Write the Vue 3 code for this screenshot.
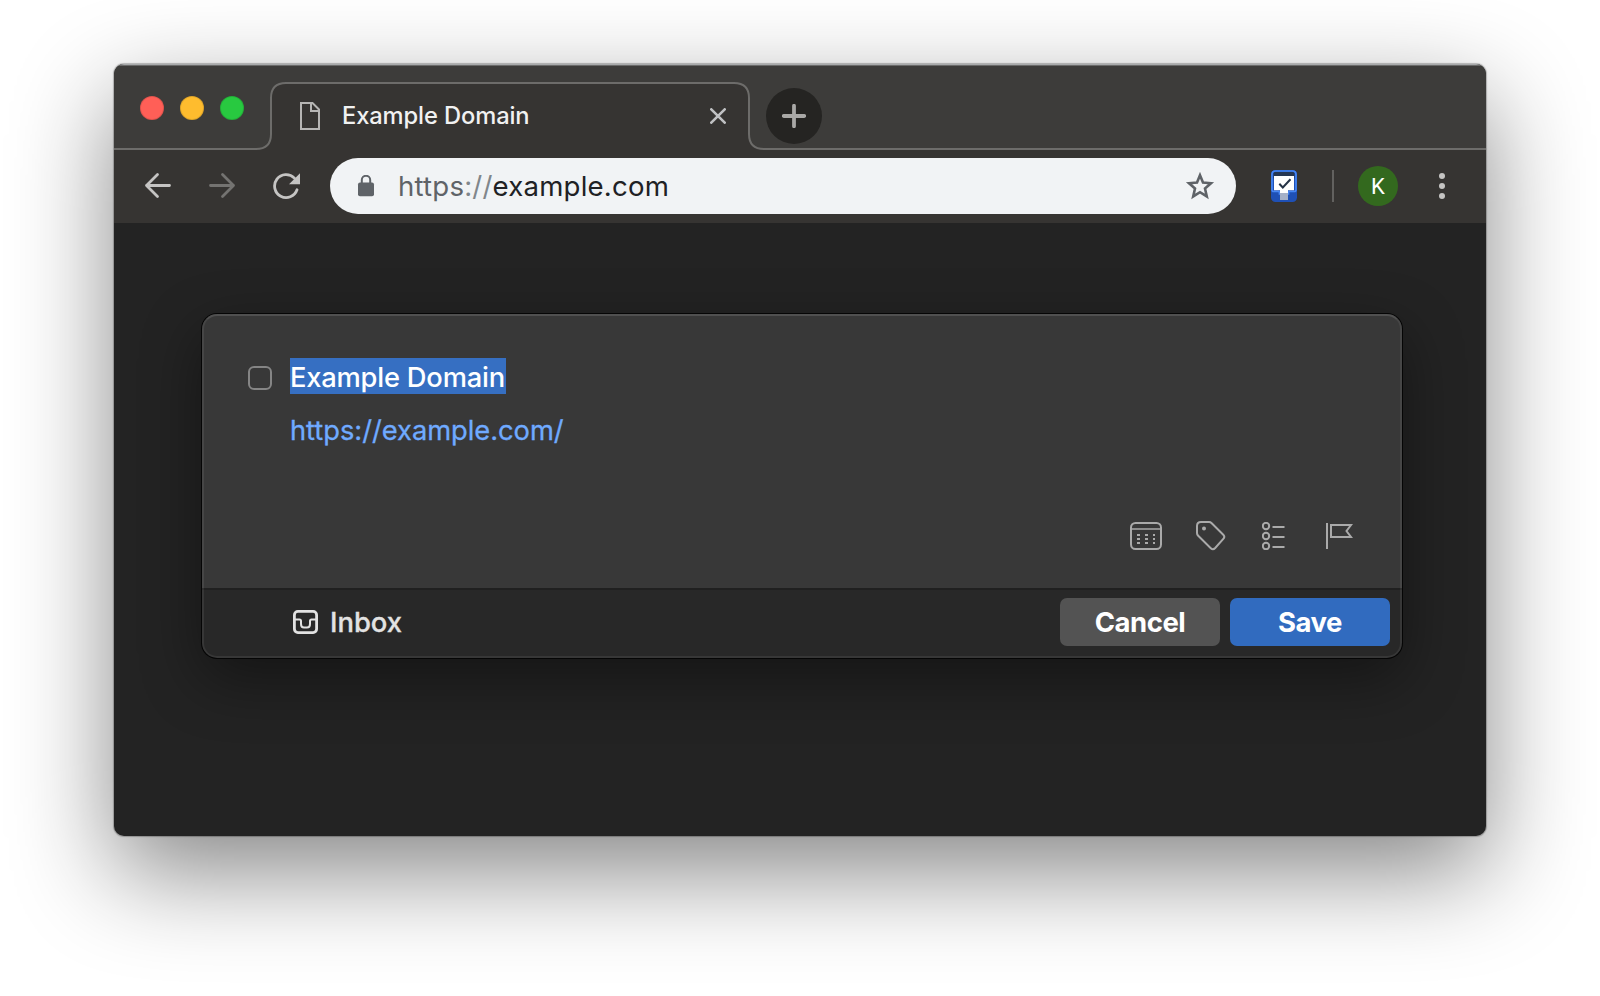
<script setup>
const lights = ['#ff5f57', '#febc2e', '#28c940']
</script>

<template>
  <main class="desktop">
    <section class="window">
      <header class="tabstrip">
        <svg class="tab-outline" width="1372" height="86" viewBox="0 0 1372 86">
          <path class="tab-fill" d="M0 85H142Q157 85 157 70V34Q157 19 172 19H620Q635 19 635 34V70Q635 85 650 85H1372V86H0Z" />
          <path class="tab-line" d="M0 85H142Q157 85 157 70V34Q157 19 172 19H620Q635 19 635 34V70Q635 85 650 85H1372" />
        </svg>
        <div class="lights">
          <span v-for="c in lights" :key="c" class="light" :style="{ background: c }"></span>
        </div>
        <div class="tab">
          <svg class="doc" width="20" height="28" viewBox="0 0 20 28">
            <path d="M1 1H12.5L19 7.5V27H1ZM11 1V9H19" />
          </svg>
          <span class="tab-title">Example Domain</span>
          <svg class="close" width="16" height="16" viewBox="0 0 16 16">
            <path d="M1.3 1.3L14.7 14.7M14.7 1.3L1.3 14.7" />
          </svg>
        </div>
        <button class="newtab">
          <svg width="24" height="24" viewBox="0 0 24 24"><path d="M12 1.8V22.2M1.8 12H22.2" /></svg>
        </button>
      </header>

      <nav class="toolbar">
        <svg class="nav" width="28" height="28" viewBox="0 0 28 28">
          <path d="M25.500 13.500H2.500M13.500 2.500L2.500 13.500L13.500 24.500" />
        </svg>
        <svg class="nav dim" width="28" height="28" viewBox="0 0 28 28">
          <path d="M2.500 13.500H25.500M14.500 2.500L25.500 13.500L14.500 24.500" />
        </svg>
        <svg class="nav reload" width="28" height="28" viewBox="0 0 28 28">
          <path d="M22.4 6.1A11.5 11.5 0 1 0 25 17.8" />
          <path class="solid" d="M28 1.2V12.2H17Z" />
        </svg>
        <div class="omnibox">
          <svg width="18" height="22" viewBox="0 0 18 22">
            <rect x="1" y="7.6" width="16" height="13.6" rx="2" fill="#5f6368" />
            <path d="M4.8 8V5A4.2 4.2 0 0 1 13.2 5V8" fill="none" stroke="#5f6368" stroke-width="2" />
          </svg>
          <span class="url"><span class="scheme">https</span><span class="slashes">://</span>example.com</span>
          <svg class="star" width="30" height="30" viewBox="0 0 30 30">
            <path d="M15 4.200L18 11.500L26 12.200L20 17.500L21.800 25.400L15 21.200L8.200 25.400L10 17.500L4 12.200L12 11.500Z" />
          </svg>
        </div>
        <svg class="ext" width="26" height="32" viewBox="0 0 26 32">
          <rect width="26" height="32" rx="4.5" fill="#1f50b5" />
          <rect x="2.5" y="2" width="21" height="7" rx="1.5" fill="#263752" />
          <path d="M1 20V4.500Q1 1 4.500 1H21.500Q25 1 25 4.500V20Q25 21.500 23 21.500H18.500Q17.500 21.500 17.500 23V24H8.500V23Q8.500 21.500 7.500 21.500H3Q1 21.500 1 20" fill="none" stroke="#4686f4" stroke-width="1.700" />
          <path d="M3 6H23V20.300H3Z" fill="#fff" />
          <path d="M9 20H17V30H9Z" fill="#a6b1c8" />
          <path d="M9 20H17V23H9Z" fill="#fff" />
          <path d="M8.300 13.800L11.800 17.500L19.500 9.300" fill="none" stroke="#263346" stroke-width="2" />
        </svg>
        <span class="divider"></span>
        <span class="avatar">K</span>
        <svg class="dots" width="6" height="26" viewBox="0 0 6 26">
          <circle cx="3" cy="3" r="3" /><circle cx="3" cy="13" r="3" /><circle cx="3" cy="23" r="3" />
        </svg>
      </nav>

      <div class="page">
        <article class="dialog">
          <div class="editor">
            <div class="fields">
              <span class="checkbox"></span>
              <div class="texts">
                <div class="title"><span class="selected">Example Domain</span></div>
                <div class="link">https://example.com/</div>
              </div>
            </div>
            <div class="actions">
              <svg width="32" height="28" viewBox="0 0 32 28">
                <rect x="1" y="1" width="30" height="26" rx="4.500" />
                <path d="M1 7H31" stroke-width="1.500" />
                <path d="M7 13H25M7 17H25M7 21H25" stroke-dasharray="3 5" />
              </svg>
              <svg width="30" height="30" viewBox="0 0 30 30">
                <path d="M1 12V5Q1 1 5 1H13Q14.500 1 15.700 2.200L27.300 13.700Q29.300 15.800 27.300 17.900L19.200 27Q17 29.300 14.800 27.200L2.200 14.800Q1 13.600 1 12Z" />
                <circle cx="8" cy="7.500" r="2" class="filled" />
              </svg>
              <svg class="list" width="23" height="28" viewBox="0 0 23 28">
                <circle cx="4" cy="4" r="3.200" /><circle cx="4" cy="14" r="3.200" /><circle cx="4" cy="24" r="3.200" />
                <path d="M10.500 5H22.500M10.500 15H22.500M10.500 25H22.500" />
              </svg>
              <svg class="flag" width="28" height="28" viewBox="0 0 28 28">
                <path d="M2 1V27M6 3H26L21.500 9L26 15H6Z" />
              </svg>
            </div>
          </div>
          <footer class="footer">
            <svg class="inbox-icon" width="25" height="24" viewBox="0 0 25 24">
              <rect x="1.400" y="1.400" width="22.200" height="21.200" rx="3.500" />
              <path d="M1.500 9.500H6.500Q8 9.500 8 11V14Q8 17.500 11 17.500H14Q17 17.500 17 14V11Q17 9.500 18.500 9.500H23.500" stroke-width="2" />
            </svg>
            <span class="inbox">Inbox</span>
            <button class="btn cancel">Cancel</button>
            <button class="btn save">Save</button>
          </footer>
        </article>
      </div>
    </section>
  </main>
</template>

<style>
html, body { margin: 0; background: #fff; overflow: hidden; }
</style>

<style scoped>
* { box-sizing: border-box; }
.desktop {
  width: 1600px;
  height: 996px;
  padding: 64px 114px 0;
  overflow: hidden;
  background: #fff;
  font-family: Inter, "Liberation Sans", sans-serif;
}
.window {
  width: 1372px;
  height: 772px;
  border-radius: 10px;
  overflow: hidden;
  background: #232323;
  box-shadow: 0 0 1px 1px rgba(0, 0, 0, .25), 0 36px 100px rgba(0, 0, 0, .48);
  display: flex;
  flex-direction: column;
}
svg { display: block; flex: none; }
button { border: 0; padding: 0; font-family: inherit; }
.tabstrip {
  position: relative;
  height: 86px;
  background: #3d3c3a;
  display: flex;
  box-shadow: inset 0 1px #a8aaab, inset 0 2px #6b6b6a;
}
.tab-outline { position: absolute; left: 0; top: 0; }
.tab-fill { fill: #363432; }
.tab-line { fill: none; stroke: #6d6c6a; stroke-width: 2; }
.lights { display: flex; gap: 16px; padding: 32px 0 0 26px; width: 186px; }
.light { width: 24px; height: 24px; border-radius: 50%; box-shadow: inset 0 0 0 1px rgba(0, 0, 0, .12); }
.tab { position: relative; display: flex; align-items: center; width: 426px; height: 64px; margin-top: 20px; }
.doc { fill: none; stroke: #b6b5b4; stroke-width: 2; }
.tab-title { flex: 1; margin-left: 22px; padding-bottom: 2px; font-size: 23.700px; letter-spacing: -.1px; font-weight: 500; color: #f1f1f1; white-space: nowrap; }
.close { fill: none; stroke: #bfc0c2; stroke-width: 2.600; stroke-linecap: round; }
.newtab {
  position: relative; width: 56px; height: 56px; margin: 24px 0 0 40px; border-radius: 50%;
  background: #252422; display: flex; align-items: center; justify-content: center;
}
.newtab path { stroke: #a9a8a6; stroke-width: 3.800; stroke-linecap: round; }
.toolbar { height: 73px; background: #363432; display: flex; align-items: center; padding: 0 0 1px 30px; }
.nav { fill: none; stroke: #c5c4c3; stroke-width: 2.800; stroke-linecap: round; stroke-linejoin: round; margin-right: 36px; }
.nav.dim { stroke: #747371; }
.nav.reload { margin-right: 30px; }
.nav .solid { fill: #c5c4c3; stroke: none; }
.omnibox { width: 906px; height: 56px; border-radius: 28px; background: #f1f3f5; display: flex; align-items: center; padding: 0 21px 0 27px; }
.url { flex: 1; margin-left: 23px; font-size: 27.600px; letter-spacing: .2px; color: #202124; white-space: nowrap; }
.scheme { color: #5f6368; }
.slashes { color: #80868b; }
.star { fill: none; stroke: #5f6368; stroke-width: 2.600; }
.ext { margin-left: 35px; }
.divider { width: 2px; height: 32px; margin-left: 35px; background: #62615f; }
.avatar {
  width: 40px; height: 40px; margin-left: 24px; border-radius: 50%; background: #33691e; color: #fff;
  font: 22px/41px Roboto, sans-serif; text-align: center;
}
.dots { margin-left: 41px; fill: #c5c4c3; }
.page { flex: 1; padding: 91px 0 0 88px; }
.dialog {
  width: 1200px; height: 344px; border-radius: 15px; background: #282828; overflow: hidden; position: relative;
  box-shadow: 0 0 0 1px #050505, 0 20px 60px rgba(0, 0, 0, .42);
  display: flex; flex-direction: column;
}
.dialog::after {
  content: ""; position: absolute; inset: 0; border-radius: 15px;
  border: 2px solid rgba(255, 255, 255, .07); border-top-color: rgba(255, 255, 255, .12); pointer-events: none;
}
.editor { height: 274px; background: #383838; display: flex; flex-direction: column; justify-content: space-between; }
.fields { display: flex; padding: 44px 0 0 46px; }
.checkbox { width: 24px; height: 24px; margin-top: 8px; border: 2px solid #858585; border-radius: 6px; }
.texts { margin-left: 18px; font-size: 27.300px; line-height: 36px; }
.title { height: 36px; color: #fff; }
.selected { display: block; width: 216px; height: 36px; line-height: 40px; letter-spacing: -.2px; background: #366fc2; white-space: nowrap; font-weight: 500; }
.link { margin-top: 19px; letter-spacing: -.03px; color: #6faaff; white-space: nowrap; -webkit-text-stroke: .3px #6faaff; }
.actions { display: flex; align-items: center; padding: 0 49px 37px 0; justify-content: flex-end; }
.actions svg { fill: none; stroke: #aaa; stroke-width: 2; margin-left: 34px; }
.actions .list { margin-left: 36px; }
.actions .flag { margin-left: 40px; }
.actions .filled { fill: #aaa; stroke: none; }
.footer { flex: 1; border-top: 2px solid #202020; display: flex; align-items: center; padding: 0 12px 5px 91px; }
.inbox-icon { fill: none; stroke: #e2e2e2; stroke-width: 2.800; }
.inbox { flex: 1; margin-left: 12px; padding-top: 1px; font-size: 27.400px; font-weight: 500; color: #e2e2e2; -webkit-text-stroke: .3px #e2e2e2; }
.btn { width: 160px; height: 48px; border-radius: 7px; margin-left: 10px; padding-top: 1px; color: #fff; font-size: 27.500px; letter-spacing: -.5px; font-weight: 700; }
.cancel { background: #535353; }
.save { background: #316bbf; }
</style>
